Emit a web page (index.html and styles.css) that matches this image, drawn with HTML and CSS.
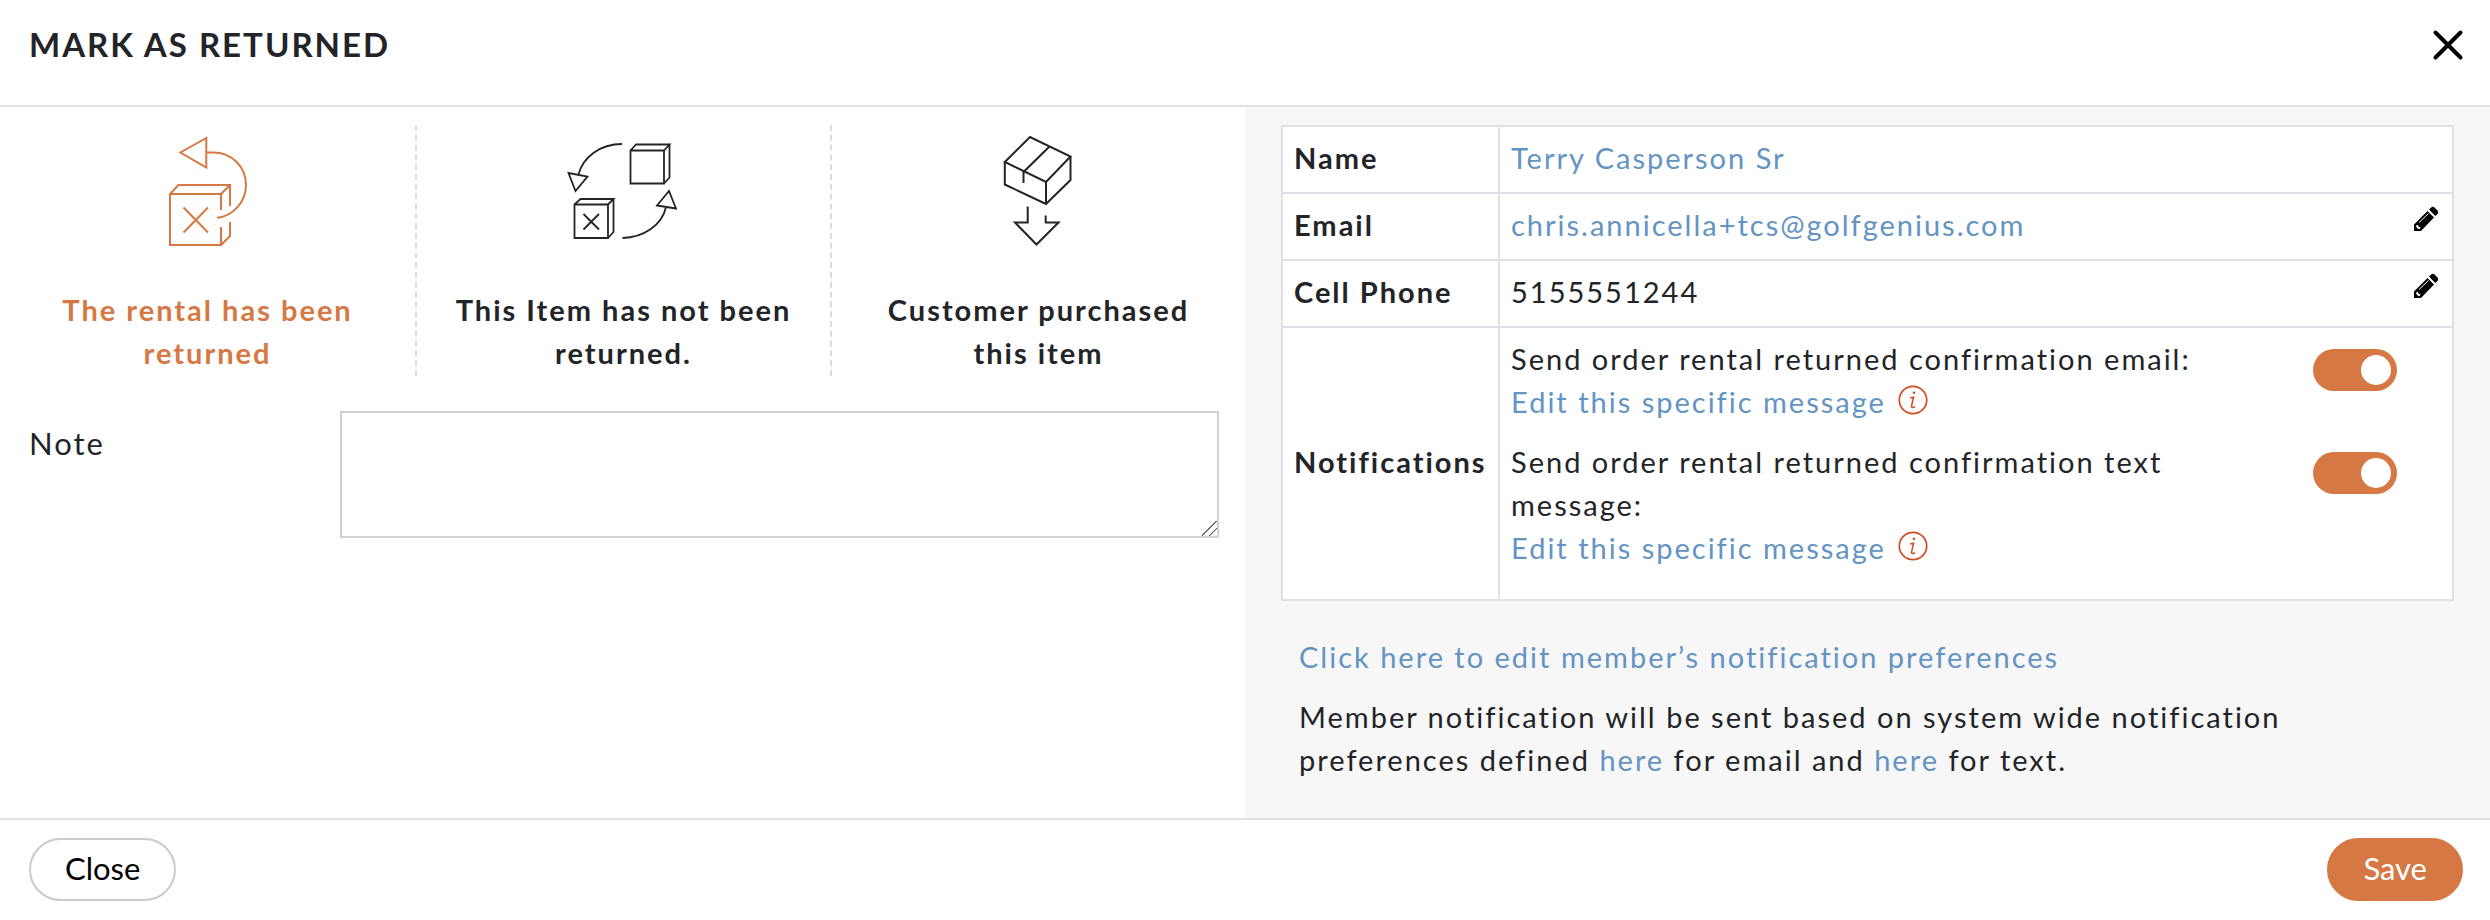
FILE: index.html
```html
<!DOCTYPE html>
<html lang="en">
<head>
<meta charset="utf-8">
<title>Mark as returned</title>
<link rel="stylesheet" href="styles.css">
</head>
<body>
<div class="modal" role="dialog" aria-labelledby="modal-title">
  <header class="modal-header">
    <h1 class="modal-title" id="modal-title">MARK AS RETURNED</h1>
    <button class="icon-button close-x" type="button" aria-label="Close dialog">
      <svg width="32" height="32" viewBox="0 0 32 32" fill="none" stroke="#000" stroke-width="4" stroke-linecap="round"><path d="M3.500 3.500 28.500 28.500M28.500 3.500 3.500 28.500"/></svg>
    </button>
  </header>

  <main class="modal-body">
    <section class="form-pane">
      <div class="options">
        <button class="option option-active" type="button" aria-pressed="true">
          <svg class="option-icon" width="130" height="140" viewBox="3 0 130 140" fill="none" stroke="currentColor" stroke-width="2">
            <path d="M66.300 18 40.500 32.500 66.300 47.500ZM67 32.500H73C92 32.500 106 47 106 65C106 82 93 96 77 97.800"/>
            <path d="M81 90V74H30V125H81V107M30 74 38.500 65H90V86M81 74 90 65M90 102V116L81 125"/>
            <path d="M43.500 87.500 68 112.500M68 87.500 43.500 112.500"/>
          </svg>
          <span class="option-label">The rental has been returned</span>
        </button>
        <button class="option" type="button" aria-pressed="false">
          <svg class="option-icon" width="140" height="140" viewBox="4 0 140 140" fill="none" stroke="currentColor" stroke-width="1.800">
            <path d="M72 24C50 24 33 37 28.500 54.500M18.500 53 37.500 56.500 25.500 71Z"/>
            <path d="M80.500 30.500H114V63.500H80.500ZM80.500 30.500 86 24.500H119.500L114 30.500M119.500 24.500V57.500L114 63.500"/>
            <path d="M24.500 84.500H58V118H24.500ZM24.500 84.500 30.500 79H63.500L58 84.500M63.500 79V112L58 118"/>
            <path d="M33.500 94 49 109.500M49 94 33.500 109.500"/>
            <path d="M72.500 118C94 117.500 112 105 116 87M107 85.500 126 88.500 119 71Z"/>
          </svg>
          <span class="option-label">This Item has not been returned.</span>
        </button>
        <button class="option" type="button" aria-pressed="false">
          <svg class="option-icon" width="120" height="140" viewBox="-1 0 120 140" fill="none" stroke="currentColor" stroke-width="2">
            <path d="M24.800 42 50 17 90.500 36.500 66 62ZM24.800 42V64.500L66 84 90.500 60V36.500M66 62V84M69 27 43.500 52V63"/>
            <path d="M47.700 86.500V102.500H35L56.500 124.500 78.500 102.500H65.700V95.500"/>
          </svg>
          <span class="option-label">Customer purchased this item</span>
        </button>
      </div>
      <div class="note-row">
        <label class="note-label" for="note">Note</label>
        <textarea class="note-input" id="note"></textarea>
      </div>
    </section>

    <aside class="info-pane">
      <table class="info-table">
        <tbody>
          <tr>
            <th scope="row">Name</th>
            <td><a href="#">Terry Casperson Sr</a></td>
          </tr>
          <tr>
            <th scope="row">Email</th>
            <td>
              <div class="cell-row">
                <a href="#">chris.annicella+tcs@golfgenius.com</a>
                <button class="icon-button edit" type="button" aria-label="Edit email"><svg width="26" height="26" viewBox="0 0 26 26"><use href="#pencil"/></svg></button>
              </div>
            </td>
          </tr>
          <tr>
            <th scope="row">Cell Phone</th>
            <td>
              <div class="cell-row">
                <span>5155551244</span>
                <button class="icon-button edit" type="button" aria-label="Edit cell phone"><svg width="26" height="26" viewBox="0 0 26 26"><use href="#pencil"/></svg></button>
              </div>
            </td>
          </tr>
          <tr>
            <th scope="row">Notifications</th>
            <td>
              <div class="notice">
                <div class="notice-text">
                  <label for="notify-email">Send order rental returned confirmation email:</label>
                  <div class="notice-edit">
                    <a href="#">Edit this specific message</a>
                    <svg class="info" width="30" height="30" viewBox="0 0 30 30"><use href="#info"/></svg>
                  </div>
                </div>
                <input class="toggle" id="notify-email" type="checkbox" role="switch" checked>
              </div>
              <div class="notice">
                <div class="notice-text">
                  <label for="notify-text">Send order rental returned confirmation text message:</label>
                  <div class="notice-edit">
                    <a href="#">Edit this specific message</a>
                    <svg class="info" width="30" height="30" viewBox="0 0 30 30"><use href="#info"/></svg>
                  </div>
                </div>
                <input class="toggle" id="notify-text" type="checkbox" role="switch" checked>
              </div>
            </td>
          </tr>
        </tbody>
      </table>
      <div class="preferences">
        <p><a href="#">Click here to edit member’s notification preferences</a></p>
        <p>Member notification will be sent based on system wide notification preferences defined <a href="#">here</a> for email and <a href="#">here</a> for text.</p>
      </div>
    </aside>
  </main>

  <footer class="modal-footer">
    <button class="button" type="button">Close</button>
    <button class="button button-primary" type="button">Save</button>
  </footer>
</div>

<svg class="symbols" width="0" height="0" aria-hidden="true">
  <symbol id="pencil" viewBox="0 0 26 26">
    <path d="M1 25V18.500L14.500 5 21 11.500 8 25ZM16 3.500 18.500 1.200Q20 .3 21.500 1.500L24.700 4.700Q25.800 6.200 24.700 7.700L22.300 10Z"/>
    <path d="M6 16.500 15.500 7.500" stroke="#fff" fill="none"/>
    <path d="M3.200 19.500 5 18.800 5.500 20.800 7.500 21.200 6.500 23.200 5 22.800 3.200 21Z" fill="#fff"/>
  </symbol>
  <symbol id="info" viewBox="0 0 30 30">
    <circle cx="15" cy="15" r="13.700" fill="none" stroke="#d14a28" stroke-width="1.700"/>
    <circle cx="16" cy="7.800" r="1.300" fill="#d14a28"/>
    <path d="M12.200 13 15.500 12.200 13.500 21.300Q13.300 23.300 17 21.800" fill="none" stroke="#d14a28" stroke-width="1.500"/>
  </symbol>
</svg>
</body>
</html>
```
FILE: styles.css
```css
* {
  box-sizing: border-box;
}

body {
  margin: 0;
  background: #fff;
  color: #222428;
  font-family: Lato, "Open Sans", sans-serif;
  font-size: 29px;
  line-height: 43px;
  letter-spacing: 2px;
}

a {
  color: #6394c3;
  text-decoration: none;
}

p {
  margin: 0;
}

button {
  font: inherit;
  letter-spacing: inherit;
  color: inherit;
  cursor: pointer;
}

.symbols {
  position: absolute;
}

.modal {
  display: flex;
  flex-direction: column;
  min-height: 100vh;
}

.modal-header {
  display: flex;
  justify-content: space-between;
  align-items: flex-start;
  padding: 24px 26px 40px 29px;
  border-bottom: 2px solid #e0e1e6;
}

.modal-title {
  margin: 0;
  font-size: 33px;
  line-height: 41px;
  font-weight: 700;
}

.icon-button {
  display: block;
  padding: 0;
  border: 0;
  background: none;
}

.icon-button svg {
  display: block;
}

.close-x {
  margin-top: 5px;
}

.modal-body {
  display: grid;
  grid-template-columns: 1fr 1fr;
  flex: 1;
}

.form-pane {
  padding: 18px 26px 24px 0;
}

.options {
  display: grid;
  grid-template-columns: repeat(3, 1fr);
  margin-right: -26px;
}

.option {
  display: flex;
  flex-direction: column;
  align-items: center;
  padding: 0 32px;
  border: 0;
  border-left: 2px dashed #dcdcdc;
  background: none;
  font-weight: 700;
  height: 251px;
}

.option:first-child {
  border-left: 0;
}

.option-active {
  color: #d67844;
}

.option-icon {
  margin: -5px 0 28px;
}

.note-row {
  display: flex;
  align-items: flex-start;
  margin-top: 35px;
  padding-left: 29px;
}

.note-label {
  flex: 0 0 311px;
  padding-top: 11px;
  font-size: 31px;
}

.note-input {
  flex: 1;
  height: 127px;
  border: 2px solid #cfd2d6;
  font: inherit;
  resize: both;
}

.note-input::-webkit-resizer {
  background: linear-gradient(135deg, transparent 46%, #555 47% 52%, transparent 53% 70%, #555 71% 76%, transparent 77%);
}

.info-pane {
  padding: 18px 36px 34px;
  background: #f7f7f7;
}

.info-table {
  width: 100%;
  border-collapse: collapse;
  background: #fff;
}

.info-table th,
.info-table td {
  padding: 9px 11px 13px;
  border: 2px solid #e0e1e6;
  text-align: left;
}

.info-table th {
  width: 217px;
}

.cell-row {
  display: flex;
  justify-content: space-between;
  align-items: flex-start;
}

.edit {
  margin: 3px 2px 0 0;
}

.notice {
  display: flex;
  justify-content: space-between;
  align-items: flex-start;
  gap: 48px;
  margin-bottom: 17px;
}

.notice-text {
  max-width: 700px;
}

.notice-edit {
  display: flex;
  align-items: center;
  gap: 12px;
}

.info {
  margin-bottom: 4px;
}

.toggle {
  flex: none;
  display: flex;
  justify-content: flex-end;
  align-items: center;
  appearance: none;
  width: 84px;
  height: 42px;
  margin: 12px 44px 0 0;
  padding: 0 6px;
  border-radius: 21px;
  background: #d67844;
}

.toggle::before {
  content: "";
  width: 30px;
  height: 30px;
  border-radius: 50%;
  background: #fff;
}

.preferences {
  display: grid;
  gap: 17px;
  max-width: 1060px;
  padding: 34px 0 0 18px;
}

.modal-footer {
  display: flex;
  justify-content: space-between;
  padding: 18px 27px 19px 29px;
  border-top: 2px solid #e0e1e6;
}

.button {
  padding: 0 34px 2px;
  border: 2px solid #cbcbcb;
  border-radius: 32px;
  background: #fff;
  color: #000;
  font-size: 31px;
  line-height: 57px;
  letter-spacing: 0;
}

.button-primary {
  border-color: #d67844;
  background: #d67844;
  color: #fff;
}
```
